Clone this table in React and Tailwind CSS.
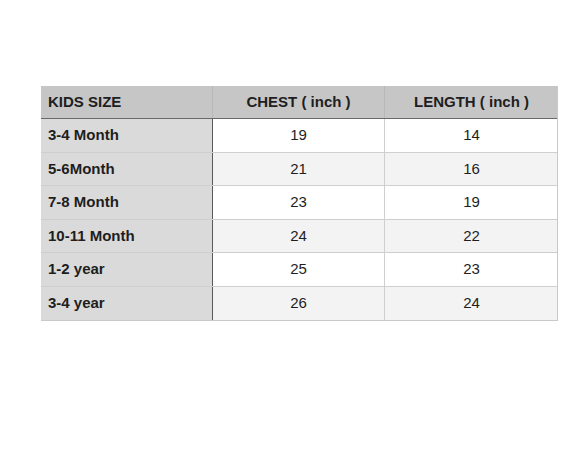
const rows = [
  ["3-4 Month", "19", "14"],
  ["5-6Month", "21", "16"],
  ["7-8 Month", "23", "19"],
  ["10-11 Month", "24", "22"],
  ["1-2 year", "25", "23"],
  ["3-4 year", "26", "24"],
];

const heights = ["h-[34px]", "h-[33px]", "h-[34px]", "h-[33px]", "h-[34px]", "h-[33px]"];

export default function App() {
  return (
    <div className="w-[587px] h-[470px] bg-white pt-[86px] pl-[41px] font-['Liberation_Sans',Arial,sans-serif] text-[15px] text-[#1e1e1e]">
      <div className="w-[517px] border-r border-b border-[#c9c9c9]">
        {/* header */}
        <div className="grid grid-cols-[172px_172px_173px] h-[33px] bg-[#c6c6c6] border-b border-[#6a6a6a] font-bold">
          <div className="flex items-center pl-[7px] border-r border-[#b8b8b8]">KIDS SIZE</div>
          <div className="flex items-center justify-center border-r border-[#b8b8b8]">CHEST ( inch )</div>
          <div className="flex items-center justify-center">LENGTH ( inch )</div>
        </div>

        {rows.map((r, i) => (
          <div
            key={r[0]}
            className={`grid grid-cols-[172px_172px_173px] ${heights[i]} ${i < rows.length - 1 ? "border-b border-[#cfcfcf]" : ""} ${i % 2 === 0 ? "bg-white" : "bg-[#f3f3f3]"}`}
          >
            <div className="flex items-center pl-[7px] bg-[#dadada] border-r border-[#5a5a5a] font-bold">{r[0]}</div>
            <div className="flex items-center justify-center border-r border-[#cfcfcf]">{r[1]}</div>
            <div className="flex items-center justify-center">{r[2]}</div>
          </div>
        ))}
      </div>
    </div>
  );
}
